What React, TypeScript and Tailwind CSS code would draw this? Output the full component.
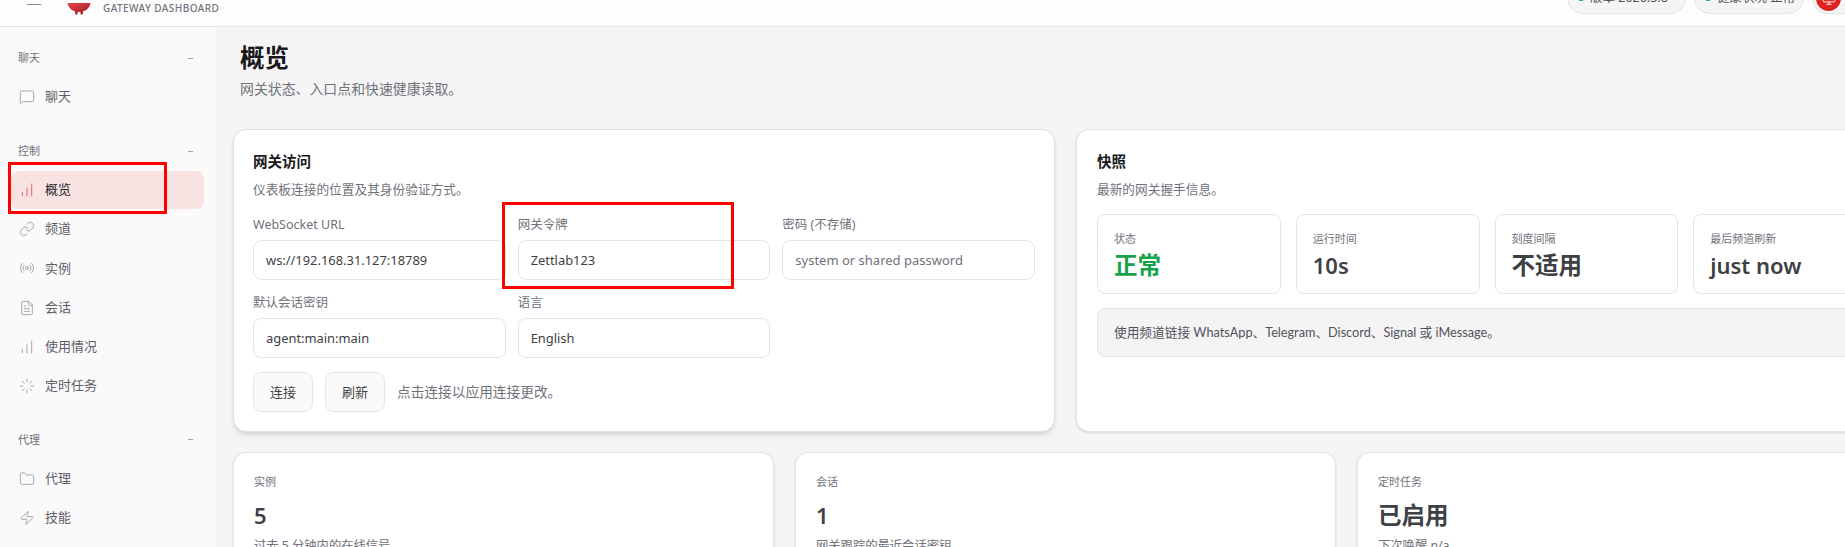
import React from "react";
import { MessageSquare, Link, Radio, FileText, ChartNoAxesColumnIncreasing, Loader, Folder, Zap, Monitor } from "lucide-react";

const FONT = "font-['Noto_Sans','Noto_Sans_CJK_SC',sans-serif]";

type NavItem = { label: string; icon: React.ComponentType<{ className?: string; strokeWidth?: number }>; active?: boolean };

const sections: { title: string; items: NavItem[] }[] = [
  { title: "聊天", items: [{ label: "聊天", icon: MessageSquare }] },
  {
    title: "控制",
    items: [
      { label: "概览", icon: ChartNoAxesColumnIncreasing, active: true },
      { label: "频道", icon: Link },
      { label: "实例", icon: Radio },
      { label: "会话", icon: FileText },
      { label: "使用情况", icon: ChartNoAxesColumnIncreasing },
      { label: "定时任务", icon: Loader },
    ],
  },
  {
    title: "代理",
    items: [
      { label: "代理", icon: Folder },
      { label: "技能", icon: Zap },
    ],
  },
];

function Logo() {
  return (
    <svg viewBox="0 0 24 12" className="w-[24px] h-[12px]">
      <defs>
        <linearGradient id="claw" x1="0" y1="0" x2="1" y2="1">
          <stop offset="0" stopColor="#e5484d" />
          <stop offset="1" stopColor="#a81c22" />
        </linearGradient>
      </defs>
      <rect x="8" y="6" width="2.6" height="5.5" rx="1.2" fill="#b3262b" />
      <rect x="13.4" y="6" width="2.6" height="5.5" rx="1.2" fill="#b3262b" />
      <path d="M0.5 0 C1 5 6 9 12 9 C18 9 23 5 23.5 0 Z" fill="url(#claw)" />
    </svg>
  );
}

function TopBar() {
  return (
    <header className="h-[27px] shrink-0 flex items-end justify-between bg-[#fdfdfd] border-b border-[#e5e5e5] overflow-hidden">
      <div className="flex items-end pb-[15px]">
        <div className="ml-[27px] w-[14px] h-[1.5px] mb-[6px] bg-[#8a8a8a]" />
        <div className="ml-[26px] mb-[-4px]">
          <Logo />
        </div>
        <div className="ml-[12px] text-[10px] leading-[14px] tracking-[0.45px] text-[#71717a] font-medium mb-[-4px]">
          GATEWAY DASHBOARD
        </div>
      </div>
      <div className="flex items-end gap-[8px] pb-[12px]">
        <div className="w-[119px] h-[32px] rounded-full border border-[#e5e5e5] bg-[#f5f5f5] flex items-center pl-[10px] gap-[6px] text-[12.5px] text-[#52525b]">
          <span className="w-[6px] h-[6px] rounded-full bg-[#16a34a]" />
          版本 2026.3.8
        </div>
        <div className="w-[110px] h-[32px] rounded-full border border-[#e5e5e5] bg-[#f5f5f5] flex items-center pl-[10px] gap-[6px] text-[12.5px] text-[#52525b]">
          <span className="w-[6px] h-[6px] rounded-full bg-[#16a34a]" />
          健康状况 正常
        </div>
        <div className="w-[33px] h-[32px] rounded-l-full border border-r-0 border-[#e5e5e5] bg-[#f5f5f5] flex items-center pl-[3px]">
          <div className="w-[25px] h-[25px] rounded-full bg-[#e02424] flex items-center justify-center mt-[1px]">
            <Monitor className="w-[14px] h-[14px] text-white" strokeWidth={1.5} />
          </div>
        </div>
      </div>
    </header>
  );
}

function Sidebar() {
  return (
    <aside className="w-[216px] shrink-0 bg-[#fafafa] pt-[23px]">
      {sections.map((section) => (
        <div key={section.title} className="mb-[27px]">
          <div className="flex items-center justify-between pl-[18px] pr-[23px] h-[16px] text-[11px] text-[#71717a]">
            <span>{section.title}</span>
            <span className="w-[5px] h-px bg-[#a1a1aa]" />
          </div>
          <div className="mt-[12px] flex flex-col gap-[1.2px]">
            {section.items.map((item) => {
              const Icon = item.icon;
              return (
                <div
                  key={item.label}
                  className={
                    item.active
                      ? "ml-[11px] w-[193px] h-[38px] rounded-[8px] bg-[#f8e2e2] flex items-center pl-[8px] text-[13px] text-[#27272a]"
                      : "ml-[11px] w-[193px] h-[38px] rounded-[8px] flex items-center pl-[8px] text-[13px] text-[#5f5f68]"
                  }
                >
                  <Icon
                    className={item.active ? "w-[16px] h-[16px] text-[#e5696b]" : "w-[16px] h-[16px] text-[#a8a8ad]"}
                    strokeWidth={1.5}
                  />
                  <span className="ml-[10px]">{item.label}</span>
                </div>
              );
            })}
          </div>
        </div>
      ))}
    </aside>
  );
}

function Field({ label, value, placeholder }: { label: string; value?: string; placeholder?: string }) {
  return (
    <div>
      <div className="h-[18px] leading-[18px] text-[12.5px] text-[#71717a]">{label}</div>
      <div
        className={
          value
            ? "mt-[6px] h-[40px] rounded-[8px] border border-[#e5e5e5] bg-white flex items-center pl-[12px] pt-[1px] text-[12.9px] text-[#3f3f46]"
            : "mt-[6px] h-[40px] rounded-[8px] border border-[#e5e5e5] bg-white flex items-center pl-[12px] pt-[1px] text-[13px] text-[#71717a]"
        }
      >
        {value ?? placeholder}
      </div>
    </div>
  );
}

function Tile({ label, value, green, latin }: { label: string; value: string; green?: boolean; latin?: boolean }) {
  let valueClass = "mt-[3px] h-[30px] leading-[30px] text-[23.5px] font-semibold text-[#3f3f46]";
  if (green) valueClass = "mt-[3px] h-[30px] leading-[30px] text-[23.5px] font-semibold text-[#16a34a]";
  if (latin) valueClass = "mt-[3px] h-[30px] leading-[30px] text-[22px] font-semibold text-[#3f3f46]";
  return (
    <div className="h-[80px] rounded-[8px] border border-[#e5e5e5] bg-white pl-[16px] pt-[16px]">
      <div className="h-[16px] leading-[16px] text-[11px] text-[#71717a]">{label}</div>
      <div className={valueClass}>{value}</div>
    </div>
  );
}

function StatCard({ label, value, sub, latin }: { label: string; value: string; sub: string; latin?: boolean }) {
  return (
    <div className="rounded-[13px] border border-[#e5e5e5] bg-white pl-[20px] pt-[21px] h-[110px] shadow-sm">
      <div className="h-[16px] leading-[16px] text-[11px] text-[#71717a]">{label}</div>
      <div
        className={
          latin
            ? "mt-[10px] h-[30px] leading-[30px] text-[22px] font-semibold text-[#3f3f46]"
            : "mt-[10px] h-[30px] leading-[30px] text-[23.5px] font-semibold text-[#3f3f46]"
        }
      >
        {value}
      </div>
      <div className="mt-[7px] h-[18px] leading-[18px] text-[12.3px] text-[#71717a]">{sub}</div>
    </div>
  );
}

function CardHead({ title, sub }: { title: string; sub: string }) {
  return (
    <>
      <div className="h-[20px] leading-[20px] text-[14.5px] font-semibold text-[#18181b]">{title}</div>
      <div className="mt-[9px] h-[18px] leading-[18px] text-[12.7px] text-[#71717a]">{sub}</div>
    </>
  );
}

export default function App() {
  return (
    <div className={`${FONT} relative w-[1845px] h-[547px] overflow-hidden flex flex-col bg-[#f5f5f5]`}>
      <TopBar />
      <div className="flex flex-1 min-h-0">
        <Sidebar />
        <main className="flex-1 min-w-0 pl-[17px] pt-[15px]">
          <div className="w-[1665px]">
            <div className="pl-[7px]">
              <h1 className="h-[32px] leading-[32px] text-[24.5px] font-bold text-[#18181b]">概览</h1>
              <p className="mt-[5px] h-[20px] leading-[20px] text-[13.9px] text-[#71717a]">网关状态、入口点和快速健康读取。</p>
            </div>

            <div className="mt-[30px] grid grid-cols-2 gap-[21px]">
              <section className="h-[303px] rounded-[13px] border border-[#e0e0e0] bg-white px-[19px] pt-[21px] shadow-md">
                <CardHead title="网关访问" sub="仪表板连接的位置及其身份验证方式。" />
                <div className="mt-[18px] grid grid-cols-3 gap-x-[12px] gap-y-[14px]">
                  <Field label="WebSocket URL" value="ws://192.168.31.127:18789" />
                  <Field label="网关令牌" value="Zettlab123" />
                  <Field label="密码 (不存储)" placeholder="system or shared password" />
                  <Field label="默认会话密钥" value="agent:main:main" />
                  <Field label="语言" value="English" />
                </div>
                <div className="mt-[14px] flex items-center gap-[12px]">
                  <button className="w-[60px] h-[40px] pt-[1px] rounded-[8px] border border-[#e5e5e5] bg-[#fafafa] text-[13px] text-[#3f3f46]">连接</button>
                  <button className="w-[60px] h-[40px] pt-[1px] rounded-[8px] border border-[#e5e5e5] bg-[#fafafa] text-[13px] text-[#3f3f46]">刷新</button>
                  <span className="pt-[1px] text-[13.7px] text-[#71717a]">点击连接以应用连接更改。</span>
                </div>
              </section>

              <section className="h-[303px] rounded-[13px] border border-[#e5e5e5] bg-white px-[20px] pt-[21px] shadow-sm">
                <CardHead title="快照" sub="最新的网关握手信息。" />
                <div className="mt-[16px] grid grid-cols-4 gap-[15px]">
                  <Tile label="状态" value="正常" green />
                  <Tile label="运行时间" value="10s" latin />
                  <Tile label="刻度间隔" value="不适用" />
                  <Tile label="最后频道刷新" value="just now" latin />
                </div>
                <div className="mt-[14px] h-[49px] rounded-[8px] border border-[#e5e5e5] bg-[#f4f4f4] flex items-center pl-[16px] text-[12.7px] text-[#52525b] font-['Lato','Noto_Sans_CJK_SC',sans-serif]">
                  使用频道链接 WhatsApp、Telegram、Discord、Signal 或 iMessage。
                </div>
              </section>
            </div>

            <div className="mt-[20px] grid grid-cols-3 gap-[21px]">
              <StatCard label="实例" value="5" sub="过去 5 分钟内的在线信号。" latin />
              <StatCard label="会话" value="1" sub="网关跟踪的最近会话密钥。" latin />
              <StatCard label="定时任务" value="已启用" sub="下次唤醒 n/a" />
            </div>
          </div>
        </main>
      </div>

      {/* red annotation boxes drawn over the screenshot */}
      <div className="absolute left-[8px] top-[162px] w-[159px] h-[52px] border-[3px] border-[#ff0000] pointer-events-none" />
      <div className="absolute left-[502px] top-[202px] w-[232px] h-[87px] border-[3px] border-[#ff0000] pointer-events-none" />
    </div>
  );
}
